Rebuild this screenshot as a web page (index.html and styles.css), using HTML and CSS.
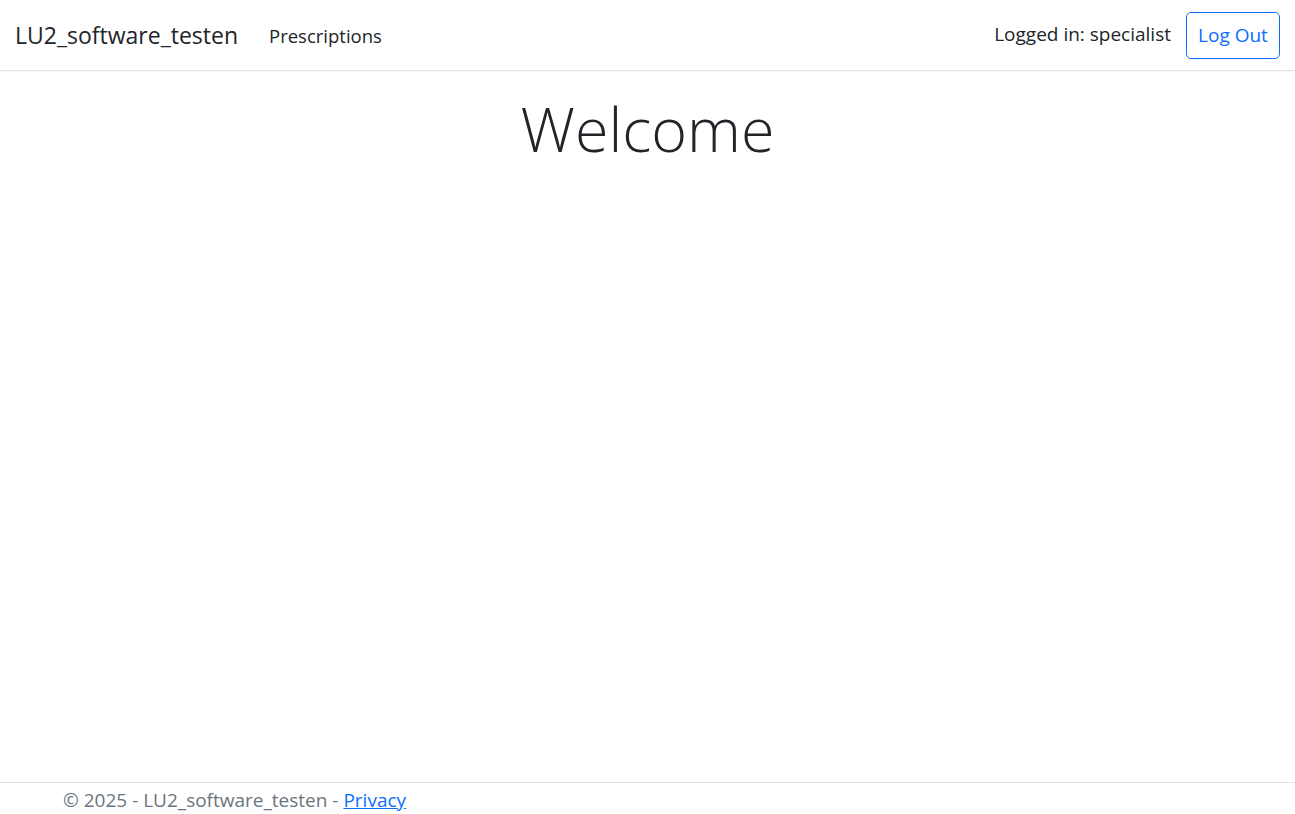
FILE: index.html
```html
<!DOCTYPE html>
<html lang="en">
<head>
<meta charset="utf-8">
<title>Home - LU2_software_testen</title>
<link rel="stylesheet" href="styles.css">
</head>
<body>
<header class="navbar">
  <div class="nav-left">
    <a class="brand" href="#">LU2_software_testen</a>
    <a class="nav-link" href="#">Prescriptions</a>
  </div>
  <div class="nav-right">
    <span class="user">Logged in: specialist</span>
    <button class="btn-outline">Log Out</button>
  </div>
</header>
<main class="main">
  <h1 class="display">Welcome</h1>
</main>
<footer class="footer">
  <div class="footer-inner">© 2025 - LU2_software_testen - <a href="#">Privacy</a></div>
</footer>
</body>
</html>
```
FILE: styles.css
```css
html, body {
  margin: 0;
  padding: 0;
  height: 100%;
}
body {
  font-family: "Open Sans", "Noto Sans", sans-serif;
  color: #212529;
  background: #fff;
  display: flex;
  flex-direction: column;
  font-size: 19px;
}
.navbar {
  display: flex;
  justify-content: space-between;
  align-items: stretch;
  height: 71px;
  box-sizing: border-box;
  padding: 12px 15px 11px 15px;
  border-bottom: 1px solid #dee2e6;
  box-shadow: 0 1px 2px rgba(0,0,0,0.03);
}
.nav-left, .nav-right {
  display: flex;
  align-items: center;
}
.brand {
  font-size: 23px;
  color: #212529;
  text-decoration: none;
  margin-right: 31px;
  margin-top: -1px;
}
.nav-link {
  font-size: 18.5px;
  color: #212529;
  text-decoration: none;
  margin-top: 0;
}
.user {
  margin-right: 15px;
  margin-top: -3px;
}
.btn-outline {
  font-family: inherit;
  font-size: 19px;
  height: 47px;
  width: 94px;
  padding: 0 0 2px 0;
  background: #fff;
  color: #0d6efd;
  border: 1px solid #0d6efd;
  border-radius: 5px;
}
.main {
  flex: 1;
  padding-top: 21px;
}
.display {
  margin: 0;
  text-align: center;
  font-size: 61px;
  font-weight: 300;
  line-height: 1.2;
}
.footer {
  border-top: 1px solid #dee2e6;
  height: 31px;
  color: #6c757d;
}
.footer-inner {
  padding-left: 63px;
  line-height: 34px;
}
.footer a {
  color: #0d6efd;
}
```
